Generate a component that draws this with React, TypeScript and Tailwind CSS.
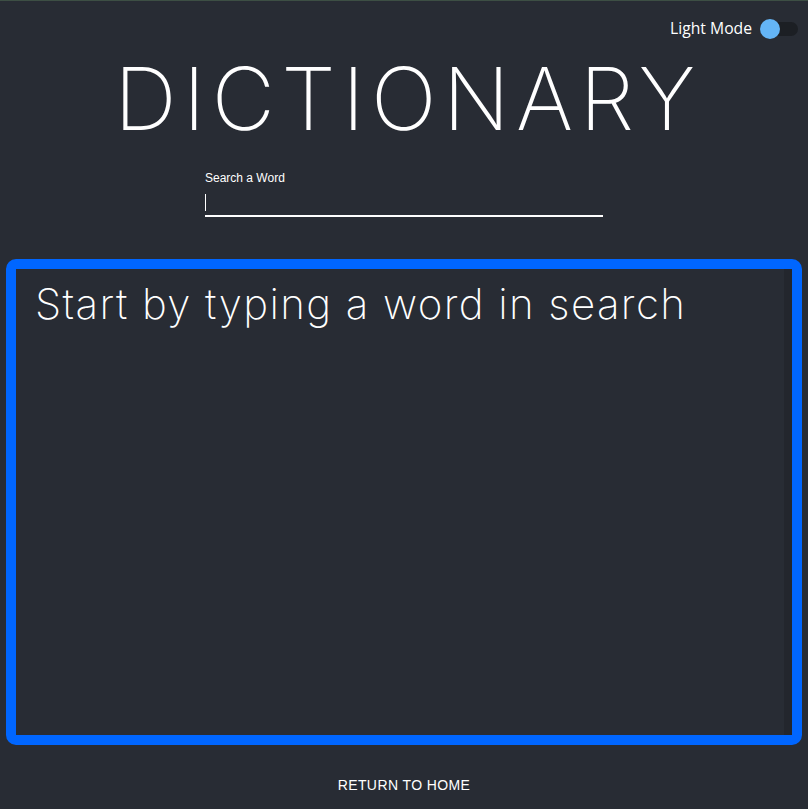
import React from "react";

const App = () => {
    return (
        <div className="min-h-[809px] w-full bg-[#282c34] border-t border-[#3d4f44] flex flex-col font-['Liberation_Sans',sans-serif] text-white">
            <div className="flex justify-end items-center h-[56px] pr-[10px]">
                <span className="font-['Open_Sans',sans-serif] text-[15.7px] text-white mr-[8px]">Light Mode</span>
                <div className="relative w-[38px] h-[20px] flex items-center">
                    <div className="absolute left-[4px] right-0 h-[14px] rounded-full bg-[#1c1f24]" />
                    <div className="absolute left-0 w-[20px] h-[20px] rounded-full bg-[#64b5f6]" />
                </div>
            </div>
            <h1 className="text-center pl-[8px] font-['Inter',sans-serif] font-[200] text-[87px] leading-[90px] tracking-[6.5px] -mt-[3px]">
                DICTIONARY
            </h1>
            <div className="w-[398px] mx-auto mt-[27px]">
                <label className="block text-[12px] leading-[14px]">Search a Word</label>
                <div className="mt-[7px] h-[25px] border-b-2 border-white flex items-start pt-[2px]">
                    <div className="w-[1px] h-[17px] bg-white" />
                </div>
            </div>
            <div className="mx-[6px] mt-[42px] h-[486px] border-[10px] border-[#0066ff] rounded-[10px] flex">
                <div className="flex-1 pl-[19px] pt-[10px]">
                    <p className="font-['Inter',sans-serif] font-[200] text-[42px] leading-[50px] tracking-[1.4px]">
                        Start by typing a word in search
                    </p>
                </div>
                <div className="w-[8px] bg-[#23262d]" />
            </div>
            <div className="flex justify-center mt-[24px]">
                <button className="text-[14px] tracking-[0.4px] uppercase px-[8px] py-[6px]">Return to Home</button>
            </div>
        </div>
    );
};

export default App;
